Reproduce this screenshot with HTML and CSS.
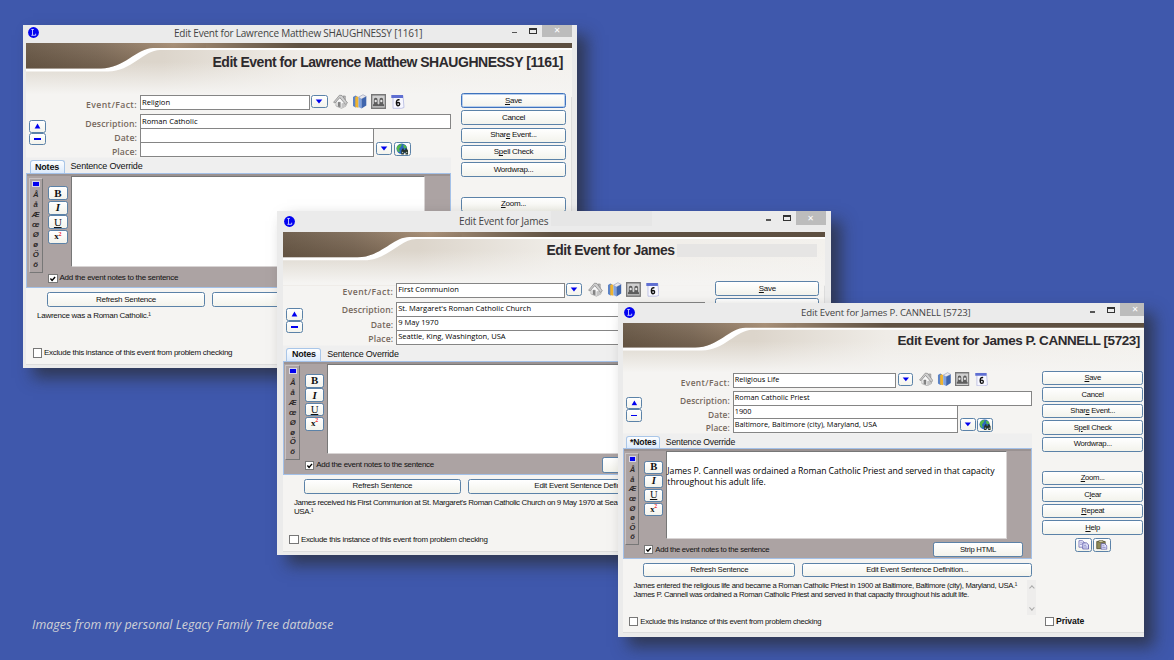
FILE: index.html
```html
<!DOCTYPE html>
<html lang="en">
<head>
<meta charset="utf-8">
<title>Legacy Family Tree events</title>
<link rel="stylesheet" href="styles.css">
</head>
<body>
<svg class="defs" width="0" height="0">
  <defs>
    <linearGradient id="brown" x1="0" y1="0" x2="1" y2="0">
      <stop offset="0" stop-color="#716150"/><stop offset=".13" stop-color="#857361"/><stop offset=".27" stop-color="#a99179"/>
      <stop offset=".4" stop-color="#7b6a58"/><stop offset=".5" stop-color="#5f5142"/><stop offset="1" stop-color="#5d4f41"/>
    </linearGradient>
    <linearGradient id="shade" x1="0" y1="0" x2="0" y2="1">
      <stop offset="0" stop-color="#453524" stop-opacity="0"/><stop offset="1" stop-color="#453524" stop-opacity=".35"/>
    </linearGradient>
    <linearGradient id="sand" x1="0" y1="0" x2="1" y2="0">
      <stop offset="0" stop-color="#dcd6cc"/><stop offset=".25" stop-color="#dcd5cb"/><stop offset=".5" stop-color="#efece7"/><stop offset="1" stop-color="#f3f1ed"/>
    </linearGradient>
    <linearGradient id="fade" x1="0" y1="0" x2="0" y2="1">
      <stop offset=".35" stop-color="#f5f4f2" stop-opacity="0"/><stop offset=".95" stop-color="#f5f4f2"/>
    </linearGradient>
  </defs>
  <symbol id="banner" viewBox="0 0 546 54" preserveAspectRatio="none">
    <rect width="546" height="54" fill="url(#sand)"/>
    <rect width="546" height="54" fill="url(#fade)"/>
    <path d="M0 0H546V7H134C118 7 105 28.500 82 28.500H0Z" fill="#fff"/>
    <path d="M0 0H546V5H127C111 5 98 25.500 75 25.500H0Z" fill="url(#brown)"/>
    <path d="M0 0H180V5H127C111 5 98 25.500 75 25.500H0Z" fill="url(#shade)"/>
  </symbol>
  <symbol id="logo" viewBox="0 0 11 11">
    <circle cx="5.500" cy="5.500" r="5.400" fill="#0303f0"/>
    <path d="M3.300 2.500H5.800M4.500 2.500V8.200M3.300 8.300H7.700V6.700" fill="none" stroke="#cfd4ff" stroke-width=".9"/>
  </symbol>
  <symbol id="down" viewBox="0 0 8 5"><path d="M.7.5H7.300L4 4.500Z" fill="#0000f0"/></symbol>
  <symbol id="up" viewBox="0 0 8 6"><path d="M.7 5.800H7.300L4 .2Z" fill="#0000f0"/></symbol>
  <symbol id="house" viewBox="0 0 15 15">
    <path d="M10 2h2.300v4H10z" fill="#bbb" stroke="#888" stroke-width=".6"/>
    <path d="M3 7 7 3.500 13 9V12L8.500 14.300 3 12Z" fill="#f8f8f8" stroke="#999" stroke-width=".7"/>
    <path d="M8.500 14.300V9.500L13 8V12Z" fill="#c4c4c4"/>
    <path d="M.6 8.300 6.500 1.200 9 1.500 14.500 9 12.700 10.500 6.800 3.600 2 9Z" fill="#d0d0d0" stroke="#808080" stroke-width=".7"/>
    <path d="M5 8.300H7.300V13L5 12.300Z" fill="#888" stroke="#666" stroke-width=".4"/>
  </symbol>
  <symbol id="books" viewBox="0 0 15 15">
    <path d="M1 3 3.500 1.500 5.200 2.500V12.500L3.500 13.500 1 12Z" fill="#5c83c6"/>
    <path d="M3.300 3 5 2.300 6.500 3.300V13.800L3.300 13Z" fill="#f0b430"/>
    <path d="M6.500 3.200 11 .7 14.300 2.500 9.500 5Z" fill="#e8e8ee" stroke="#7a86a8" stroke-width=".5"/>
    <path d="M6.500 3.200 9.500 5V14.600L6.500 13Z" fill="#7fa2e0"/>
    <path d="M9.500 5 14.300 2.500V11.500L9.500 14.600Z" fill="#3f65ad"/>
  </symbol>
  <symbol id="photo" viewBox="0 0 16 14" preserveAspectRatio="none">
    <rect x=".7" y=".7" width="14.600" height="12.600" fill="#d0d0d0" stroke="#777" stroke-width="1.400"/>
    <path d="M2 11.500V10L3 9V5.500Q3 3.500 5 3.500 7 3.500 7 5.500V9L8 9.700 9 9V5.500Q9 3.500 11 3.500 13 3.500 13 5.500V9L14 10V11.500Z" fill="#5e5e5e"/>
    <circle cx="5" cy="6.500" r="1.200" fill="#e5e5e5"/><circle cx="11" cy="6.500" r="1.200" fill="#e5e5e5"/>
  </symbol>
  <symbol id="cal" viewBox="0 0 14 15">
    <path d="M2.500 1.500H12.500L13.500 13.500 11 14.300H2.500Z" fill="#f7f7ff" stroke="#b3b7df" stroke-width=".8"/>
    <path d="M.8 1H12.500V4H.8Z" fill="#5f6fd2"/>
    <path d="M9 5.800Q5.900 5.300 5.900 8.800 5.900 11.800 7.600 11.800 9.200 11.800 9.200 10.100 9.200 8.500 7.600 8.500 6.500 8.500 6 9.800" fill="none" stroke="#111" stroke-width="1.400"/>
  </symbol>
  <symbol id="globe" viewBox="0 0 13 12">
    <circle cx="5.800" cy="5.700" r="5.300" fill="#2a66c0"/>
    <path d="M1 3.500Q3 .6 6 1L5 3.500 3 6 4 8.500 2.500 9Q0 6.500 1 3.500ZM7 1.500Q10.500 2 10.800 5L8 5.500Z" fill="#54b64a"/>
    <path d="M5.300 11.500V7.500L6.500 5.500H7.800V7H9.300V5.500H10.700L12 7.500V11.500H9.500V9.500H7.800V11.500Z" fill="#26352d"/>
    <circle cx="6.600" cy="9.500" r=".7" fill="#b8c0b0"/><circle cx="10.700" cy="9.500" r=".7" fill="#b8c0b0"/>
  </symbol>
  <symbol id="copy" viewBox="0 0 12 10">
    <path d="M1 .7H4.500L6.500 2.500V7.500H1Z" fill="#eef" stroke="#7775b5" stroke-width=".9"/>
    <path d="M5 3H8.800L11 5V9.400H5Z" fill="#dfe0fa" stroke="#5d59a8" stroke-width=".9"/>
    <path d="M2.200 3H4.500M2.200 4.700H4M6.300 5.500H8.500M6.300 7.300H9.700" stroke="#7775b5" stroke-width=".7"/>
  </symbol>
  <symbol id="paste" viewBox="0 0 12 10">
    <path d="M.8 1.500H9.500V9H.8Z" fill="#8f8a55" stroke="#5a5636" stroke-width=".9"/>
    <path d="M3 .4H7.300V2.600H3Z" fill="#c9c6a0" stroke="#5a5636" stroke-width=".6"/>
    <path d="M5.300 3.800H9L11.300 6V9.600H5.300Z" fill="#e3e4fb" stroke="#5d59a8" stroke-width=".8"/>
    <path d="M6.500 6H8.700M6.500 7.700H10" stroke="#7775b5" stroke-width=".7"/>
  </symbol>
  <symbol id="tick" viewBox="0 0 9 9"><path d="M1.700 4 3.700 6.200 7.300 2" fill="none" stroke="#000" stroke-width="1.700"/></symbol>
</svg>

<main class="stage">
  <section class="window w1">
    <header class="titlebar">
      <svg class="logo"><use href="#logo"/></svg>
      <span class="title">Edit Event for Lawrence Matthew SHAUGHNESSY [1161]</span>
      <span class="min"></span><span class="max"></span><span class="close">✕</span>
    </header>
    <div class="body">
      <svg class="banner"><use href="#banner"/></svg>
      <h1 class="heading">Edit Event for Lawrence Matthew SHAUGHNESSY [1161]</h1>
      <div class="columns">
        <div class="left">
          <div class="form">
            <div class="updown"><span class="btn"><svg class="up"><use href="#up"/></svg></span><span class="btn"><i class="dash"></i></span></div>
            <div class="fields">
              <div class="row first"><label>Event/Fact:</label><span class="input event">Religion</span><span class="btn drop"><svg class="down"><use href="#down"/></svg></span>
                <span class="icons"><svg class="ico"><use href="#house"/></svg><svg class="ico"><use href="#books"/></svg><svg class="ico"><use href="#photo"/></svg><svg class="ico"><use href="#cal"/></svg></span></div>
              <div class="row"><label>Description:</label><span class="input wide">Roman Catholic</span></div>
              <div class="row"><label>Date:</label><span class="input mid"></span></div>
              <div class="row"><label>Place:</label><span class="input mid"></span><span class="btn drop"><svg class="down"><use href="#down"/></svg></span><span class="btn web"><svg class="globe"><use href="#globe"/></svg></span></div>
            </div>
          </div>
          <div class="tabs"><span class="tab on">Notes</span><span class="tab">Sentence Override</span></div>
          <div class="panel">
            <div class="editor">
              <div class="chars"><i class="blue"></i><b>Å</b><b>å</b><b>Æ</b><b>œ</b><b>Ø</b><b>ø</b><b>Ö</b><b>ö</b></div>
              <div class="format"><span class="btn fb">B</span><span class="btn fi">I</span><span class="btn fu">U</span><span class="btn fx">x<sup>2</sup></span></div>
              <div class="notes"></div>
            </div>
            <div class="foot"><span class="check"><svg class="tick"><use href="#tick"/></svg></span><span class="small">Add the event notes to the sentence</span></div>
          </div>
          <div class="actions"><span class="btn refresh">Refresh Sentence</span><span class="btn define"></span></div>
          <div class="sentence">Lawrence was a Roman Catholic.¹</div>
          <div class="exclude"><span class="check"></span><span class="small">Exclude this instance of this event from problem checking</span></div>
        </div>
        <div class="right">
          <span class="btn primary"><u>S</u>ave</span><span class="btn">Cancel</span><span class="btn">Shar<u>e</u> Event...</span><span class="btn">S<u>p</u>ell Check</span><span class="btn">Wordwrap...</span>
          <span class="btn gap"><u>Z</u>oom...</span>
        </div>
      </div>
    </div>
  </section>

  <section class="window w2">
    <header class="titlebar">
      <svg class="logo"><use href="#logo"/></svg>
      <span class="title">Edit Event for James</span><span class="mask"></span>
      <span class="min"></span><span class="max"></span><span class="close">✕</span>
    </header>
    <div class="body">
      <svg class="banner"><use href="#banner"/></svg>
      <h1 class="heading">Edit Event for James<span class="hidename"></span></h1>
      <div class="columns">
        <div class="left">
          <div class="form">
            <div class="updown"><span class="btn"><svg class="up"><use href="#up"/></svg></span><span class="btn"><i class="dash"></i></span></div>
            <div class="fields">
              <div class="row first"><label>Event/Fact:</label><span class="input event">First Communion</span><span class="btn drop"><svg class="down"><use href="#down"/></svg></span>
                <span class="icons"><svg class="ico"><use href="#house"/></svg><svg class="ico"><use href="#books"/></svg><svg class="ico"><use href="#photo"/></svg><svg class="ico"><use href="#cal"/></svg></span></div>
              <div class="row"><label>Description:</label><span class="input wide">St. Margaret's Roman Catholic Church</span></div>
              <div class="row"><label>Date:</label><span class="input mid">9 May 1970</span></div>
              <div class="row"><label>Place:</label><span class="input mid">Seattle, King, Washington, USA</span></div>
            </div>
          </div>
          <div class="tabs"><span class="tab on">Notes</span><span class="tab">Sentence Override</span></div>
          <div class="panel">
            <div class="editor">
              <div class="chars"><i class="blue"></i><b>Å</b><b>å</b><b>Æ</b><b>œ</b><b>Ø</b><b>ø</b><b>Ö</b><b>ö</b></div>
              <div class="format"><span class="btn fb">B</span><span class="btn fi">I</span><span class="btn fu">U</span><span class="btn fx">x<sup>2</sup></span></div>
              <div class="notes"></div>
            </div>
            <div class="foot"><span class="check"><svg class="tick"><use href="#tick"/></svg></span><span class="small">Add the event notes to the sentence</span><span class="btn strip"></span></div>
          </div>
          <div class="actions"><span class="btn refresh">Refresh Sentence</span><span class="btn define cut">Edit Event Sentence Defin</span></div>
          <div class="sentence">James received his First Communion at St. Margaret's Roman Catholic Church on 9 May 1970 at Sea<br>USA.¹</div>
          <div class="exclude"><span class="check"></span><span class="small">Exclude this instance of this event from problem checking</span></div>
        </div>
        <div class="right">
          <span class="btn"><u>S</u>ave</span><span class="btn"></span>
        </div>
      </div>
    </div>
  </section>

  <section class="window w3">
    <header class="titlebar">
      <svg class="logo"><use href="#logo"/></svg>
      <span class="title">Edit Event for James P. CANNELL [5723]</span>
      <span class="min"></span><span class="max"></span><span class="close">✕</span>
    </header>
    <div class="body">
      <svg class="banner"><use href="#banner"/></svg>
      <h1 class="heading">Edit Event for James P. CANNELL [5723]</h1>
      <div class="columns">
        <div class="left">
          <div class="form">
            <div class="updown"><span class="btn"><svg class="up"><use href="#up"/></svg></span><span class="btn"><i class="dash"></i></span></div>
            <div class="fields">
              <div class="row first"><label>Event/Fact:</label><span class="input event">Religious Life</span><span class="btn drop"><svg class="down"><use href="#down"/></svg></span>
                <span class="icons"><svg class="ico"><use href="#house"/></svg><svg class="ico"><use href="#books"/></svg><svg class="ico"><use href="#photo"/></svg><svg class="ico"><use href="#cal"/></svg></span></div>
              <div class="row"><label>Description:</label><span class="input wide">Roman Catholic Priest</span></div>
              <div class="row"><label>Date:</label><span class="input mid">1900</span></div>
              <div class="row"><label>Place:</label><span class="input mid">Baltimore, Baltimore (city), Maryland, USA</span><span class="btn drop"><svg class="down"><use href="#down"/></svg></span><span class="btn web"><svg class="globe"><use href="#globe"/></svg></span></div>
            </div>
          </div>
          <div class="tabs"><span class="tab on">*Notes</span><span class="tab">Sentence Override</span></div>
          <div class="panel">
            <div class="editor">
              <div class="chars"><i class="blue"></i><b>Å</b><b>å</b><b>Æ</b><b>œ</b><b>Ø</b><b>ø</b><b>Ö</b><b>ö</b></div>
              <div class="format"><span class="btn fb">B</span><span class="btn fi">I</span><span class="btn fu">U</span><span class="btn fx">x<sup>2</sup></span></div>
              <div class="notes">James P. Cannell was ordained a Roman Catholic Priest and served in that capacity<br>throughout his adult life.</div>
            </div>
            <div class="foot"><span class="check"><svg class="tick"><use href="#tick"/></svg></span><span class="small">Add the event notes to the sentence</span><span class="btn strip">Strip HTML</span></div>
          </div>
          <div class="actions"><span class="btn refresh">Refresh Sentence</span><span class="btn define">Edit Event Sentence Definition...</span></div>
          <div class="sentence">James entered the religious life and became a Roman Catholic Priest in 1900 at Baltimore, Baltimore (city), Maryland, USA.¹<br>James P. Cannell was ordained a Roman Catholic Priest and served in that capacity throughout his adult life.
            <span class="scroll"><i class="arr"></i><i class="arr low"></i></span></div>
          <div class="exclude"><span class="check"></span><span class="small">Exclude this instance of this event from problem checking</span></div>
        </div>
        <div class="right">
          <span class="btn"><u>S</u>ave</span><span class="btn">Cancel</span><span class="btn">Shar<u>e</u> Event...</span><span class="btn">S<u>p</u>ell Check</span><span class="btn">Wordwrap...</span>
          <span class="btn gap"><u>Z</u>oom...</span><span class="btn">C<u>l</u>ear</span><span class="btn"><u>R</u>epeat</span><span class="btn"><u>H</u>elp</span>
          <div class="clip"><span class="btn"><svg class="cp"><use href="#copy"/></svg></span><span class="btn"><svg class="cp"><use href="#paste"/></svg></span></div>
          <div class="private"><span class="check"></span><span>Private</span></div>
        </div>
      </div>
    </div>
  </section>
  <p class="caption">Images from my personal Legacy Family Tree database</p>
</main>
</body>
</html>
```
FILE: styles.css
```css
* { box-sizing: border-box; }
body { margin: 0; }
.defs { position: absolute; }
.stage { position: relative; width: 1174px; height: 660px; overflow: hidden; background: #3f58ac; font-family: "Liberation Sans", Arial, sans-serif; color: #111; }
.caption { position: absolute; left: 32px; top: 616px; margin: 0; font: italic 12.4px/17px "Open Sans", sans-serif; letter-spacing: .04px; color: #d0d1d6; white-space: nowrap; }

/* window frames */
.window { position: absolute; overflow: hidden; background: #ebebeb; box-shadow: 10px 10px 15px rgba(40, 40, 40, .65); }
.w1 { left: 23px; top: 25px; width: 554px; height: 343px; padding-left: 3px; }
.w2 { left: 277px; top: 211px; width: 554px; height: 344px; padding-left: 6px; }
.w3 { left: 618px; top: 303px; width: 526px; height: 334px; padding-left: 5px; }
.titlebar { display: flex; height: 18px; align-items: flex-start; }
.titlebar > * { flex: none; }
.w2 .titlebar { height: 21px; }
.w3 .titlebar { height: 20px; }
.logo { width: 11px; height: 11px; margin: 2px 0 0 1.500px; }
.w2 .logo { margin: 4.500px 0 0 1px; }
.w3 .logo { margin: 4px 0 0 .5px; }
.title { margin-left: 135.500px; padding-top: .5px; font: 10px/15px "Open Sans", sans-serif; letter-spacing: -.21px; color: #444; white-space: nowrap; width: 262px; }
.w2 .title { margin-left: 164px; padding-top: 3px; width: 91.500px; letter-spacing: -.17px; }
.w3 .title { margin-left: 166.500px; padding-top: 2px; width: 228px; font-size: 9.6px; letter-spacing: -.14px; }
.mask { width: 101px; height: 15px; background: #e6e6e6; margin-right: 36px; }
.w1 .min { margin-left: 76px; }
.w2 .min { margin-left: 78px; }
.w3 .min { margin-left: 61px; }
.min { width: 5px; height: 1.500px; margin-top: 6.500px; background: #555; }
.w2 .min, .w3 .min { margin-top: 8px; }
.max { width: 8px; height: 6px; margin: 2.500px 5px 0 12px; border: 1px solid #333; border-top-width: 2px; }
.w2 .max, .w3 .max { margin-top: 4px; }
.close { width: 30px; height: 12px; background: #bcbcbc; color: #fff; font: 8px/11px "DejaVu Sans", sans-serif; text-align: center; }
.w2 .close { height: 14px; line-height: 15px; }
.w3 .close { height: 13px; line-height: 14px; }

/* window contents */
.body { position: relative; width: 546px; height: 322px; background: #f5f4f2; border-bottom: 1px solid #ddd; }
.w1 .body, .w2 .body { border-right: 1px solid #ddd; }
.w2 .body { zoom: .9935; }
.w3 .body { zoom: .9635; }
.banner { position: absolute; left: 0; top: 0; width: 546px; height: 54px; }
.heading { position: relative; display: flex; justify-content: flex-end; align-items: center; height: 50px; margin: 0; padding: 0 8px 13px 0; font-size: 14px; font-weight: bold; letter-spacing: -.485px; color: #2d2a2d; white-space: nowrap; }
.w3 .heading { height: 49.300px; padding-right: 9.500px; letter-spacing: -.44px; }
.hidename { width: 140px; height: 13px; margin-left: 3px; background: #e6e5e4; }
.w2 .heading { height: 49.500px; padding-right: 8px; letter-spacing: -.48px; }
.columns { position: relative; display: flex; gap: 10px; }
.left { width: 425px; }
.right { width: 105px; display: flex; flex-direction: column; gap: 2.300px; }
.btn { display: flex; flex: none; align-items: center; justify-content: center; height: 15px; border: 1.500px solid #5b82a8; border-radius: 2.500px; background: linear-gradient(#fff, #f3f3ec); font-size: 8px; line-height: 10px; letter-spacing: -.3px; white-space: pre; }
.primary { border-color: #3f73bd; box-shadow: inset 0 0 0 1px #b6cdec; }
.gap { margin-top: 17.500px; }
.form { display: flex; padding-top: 2px; }
.w3 .form { padding-top: 2.700px; }
.updown { width: 17px; margin: 25px 0 0 3px; display: flex; flex-direction: column; }
.updown .btn { height: 12.700px; }
.up { width: 7px; height: 6px; }
.down { width: 8px; height: 5px; }
.dash { width: 7px; height: 2px; background: #0000f0; }
.fields { flex: 1; }
.row { display: flex; height: 15.300px; margin-bottom: -1px; }
.first { height: 15px; margin-bottom: 3.500px; }
.row label { width: 91px; margin-right: 3px; padding-top: 3px; text-align: right; font: 600 8.700px/14px "Open Sans", sans-serif; letter-spacing: .1px; color: #75685d; }
.first label { letter-spacing: .4px; }
.input { border: 1px solid #858585; background: #fff; padding-left: 1px; font: 7.600px/12px "Open Sans", sans-serif; white-space: nowrap; color: #000; }
.event { width: 169.500px; }
.wide { width: 311px; }
.mid { width: 234px; }
.drop { width: 16.500px; height: 13px; margin-left: 1.500px; }
.web { width: 17px; height: 14px; margin-left: 1.500px; }
.globe { width: 13px; height: 12px; }
.icons { display: flex; gap: 4px; margin: -1.500px 0 0 5.500px; }
.ico { width: 15px; height: 15px; }
.tabs { display: flex; align-items: flex-end; height: 16.700px; margin-top: -.2px; padding-left: 3.500px; background: linear-gradient(#f5f4f2 1px, #efefef 2px); }
.tab { height: 13px; padding: 0 6px; font-size: 9px; line-height: 13px; letter-spacing: -.18px; white-space: nowrap; }
.on { padding: 0; width: 35px; text-align: center; font-weight: bold; border: 1px solid #a9c6e8; border-bottom: 0; border-radius: 3px 3px 0 0; background: linear-gradient(#fdfeff, #dceafb); line-height: 12px; }
.panel { height: 115.500px; border: 1.500px solid #a4c1e8; background: #aca3a3; box-shadow: inset 0 2px 0 #9a9292; padding-left: 1.500px; }
.editor { display: flex; height: 95px; }
.chars { width: 14.500px; height: 95px; margin-top: 4px; border: 1px solid #c8c2c2; border-right-color: #777; border-bottom-color: #777; display: flex; flex-direction: column; align-items: center; padding-top: 2px; }
.chars b { height: 10px; font: italic bold 7.800px/10px "Liberation Sans", sans-serif; color: #2c2828; }
.blue { width: 8px; height: 6px; margin-bottom: 3.500px; background: #0000f0; border: 1px solid #d5d5e8; }
.format { width: 19.500px; margin: 12.500px 3px 0 5px; display: flex; flex-direction: column; gap: .8px; }
.format .btn { height: 13.700px; font-family: "Liberation Serif", serif; font-size: 11px; line-height: 11px; font-weight: bold; }
.fi { font-style: italic; }
.format .fu { text-decoration: underline; font-weight: normal; }
.format .fx { font-size: 9px; font-weight: bold; }
.fx sup { font-size: 6px; line-height: 6px; color: #e22; margin-top: -5px; }
.notes { width: 354px; height: 91.500px; margin-top: 2px; border: 1px solid #d8d4d4; border-top-color: #777; border-left: 1.500px solid #777; background: #fff; padding: 14px 0 0 .5px; font: 9px/12.400px "Open Sans", sans-serif; letter-spacing: -.05px; white-space: nowrap; color: #000; }
.foot { display: flex; align-items: center; height: 19px; padding-left: 19.500px; }
.check { flex: none; width: 9.500px; height: 9.500px; border: 1px solid #777; background: #fff; margin-right: 2px; display: flex; }
.tick { width: 8px; height: 8px; }
.small { font-size: 8px; line-height: 10px; letter-spacing: -.27px; white-space: nowrap; }
.strip { width: 94px; height: 15.500px; margin: 0 0 1px 168px; }
.foot .small { width: 120px; }
.actions { display: flex; gap: 7px; padding: 4px 0 0 21px; }
.actions .btn { height: 14.500px; letter-spacing: -.25px; }
.refresh { width: 158px; }
.define { width: 239px; }
.actions .cut { justify-content: flex-start; padding-left: 66px; }
.sentence { position: relative; height: 39px; padding: 4px 0 0 11px; font-size: 8px; line-height: 9.300px; letter-spacing: -.355px; white-space: nowrap; }
.w1 .sentence { letter-spacing: -.26px; }
.w3 .sentence { letter-spacing: -.33px; padding-top: 5px; }
.scroll { position: absolute; left: 419px; top: 3px; width: 10px; height: 36px; background: #eeedec; display: flex; flex-direction: column; justify-content: space-between; align-items: center; padding: 6px 0 5px; }
.arr { width: 4px; height: 4px; border: solid #aaa; border-width: 1px 0 0 1px; transform: rotate(45deg); }
.low { transform: rotate(225deg); }
.exclude { display: flex; align-items: center; height: 12px; margin-top: 1.200px; padding-left: 6.500px; }
.clip { display: flex; gap: 1.500px; justify-content: center; margin-top: 1px; }
.clip .btn { width: 18px; height: 14.500px; }
.cp { width: 12px; height: 10px; }
.private { display: flex; align-items: center; margin-top: 64.500px; padding-left: 3px; font-size: 9px; line-height: 11px; font-weight: bold; letter-spacing: -.1px; }
```
